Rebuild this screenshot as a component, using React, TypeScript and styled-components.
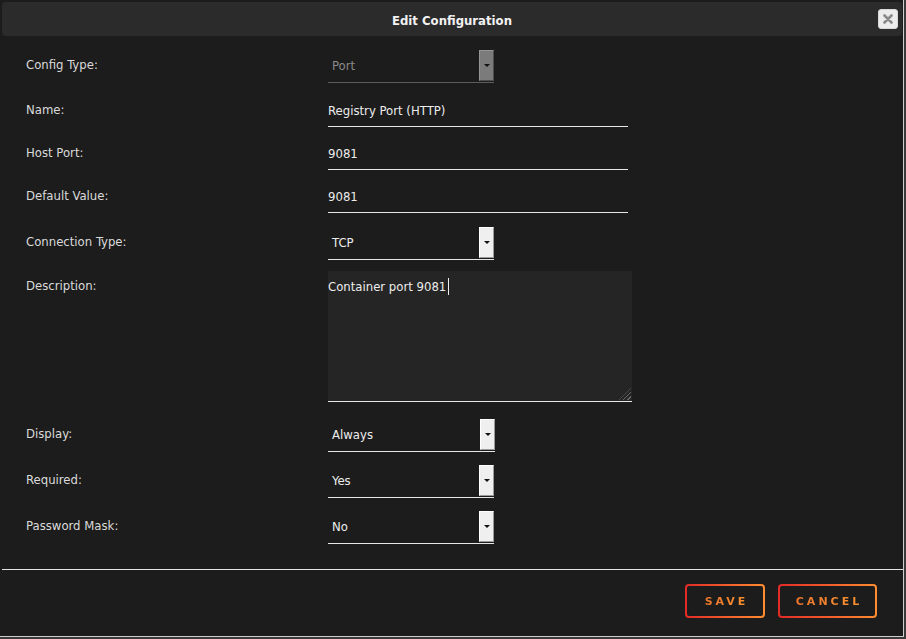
import React from 'react';
import styled, { createGlobalStyle } from 'styled-components';

const GlobalStyle = createGlobalStyle`
    html, body {
        margin:0;
        padding:0;
        background:#3a3a3a;
        width:906px;
        height:639px;
        overflow:hidden;
    }
`

const Dialog = styled.div`
    width:904px;
    height:637px;
    background-color:#1c1c1c;
    border-right:1px solid #cfcfcf;
    border-bottom:1px solid #cfcfcf;
    box-sizing:border-box;
    padding-top:2px;
    display:flex;
    flex-direction:column;
    font:normal 400 13px/1.2 "DejaVu Sans Condensed", "DejaVu Sans", sans-serif;
    color:#dcdcdc;
    position:relative;
`

const TitleBar = styled.div`
    margin:0 1px 0 2px;
    height:34px;
    padding-top:2px;
    box-sizing:border-box;
    background-color:#2b2b2b;
    border-radius:4px;
    display:flex;
    align-items:center;
    justify-content:center;
    position:relative;
`

const Title = styled.h1`
    margin:0;
    font:normal 700 13px/1 "DejaVu Sans Condensed", "DejaVu Sans", sans-serif;
    color:#f2f2f2;
`

const CloseButton = styled.button`
    position:absolute;
    right:4px;
    top:7px;
    width:20px;
    height:20px;
    padding:0;
    border:1px solid #d8d8d8;
    border-radius:3px;
    background:#ececec;
    display:flex;
    align-items:center;
    justify-content:center;
`

const Form = styled.div`
    padding:14px 0 0 26px;
    display:flex;
    flex-direction:column;
    flex:1;
`

const Row = styled.div<{ $top: number }>`
    display:grid;
    grid-template-columns:302px auto;
    margin-top:${p => p.$top}px;
`

const Label = styled.label`
    line-height:30px;
    color:#dadada;
`

const TextInput = styled.div`
    width:300px;
    height:32px;
    box-sizing:border-box;
    border-bottom:1px solid #e6e6e6;
    line-height:32px;
    color:#ececec;
`

const SelectBox = styled.div<{ $disabled?: boolean; $width?: number }>`
    width:${p => p.$width ?? 166}px;
    height:33px;
    box-sizing:border-box;
    border-bottom:1px solid ${p => p.$disabled ? '#5c5c5c' : '#e6e6e6'};
    display:flex;
    align-items:stretch;
    color:${p => p.$disabled ? '#8a8a8a' : '#ececec'};
`

const SelectValue = styled.span`
    flex:1;
    padding-left:4px;
    line-height:32px;
`

const ArrowButton = styled.span<{ $disabled?: boolean }>`
    width:15px;
    box-sizing:border-box;
    margin-bottom:1px;
    background:${p => p.$disabled ? '#7b7b7b' : '#efefef'};
    border:1px solid;
    border-color:${p => p.$disabled ? '#959595 #4e4e4e #4e4e4e #959595' : '#ffffff #9a9a9a #9a9a9a #ffffff'};
    display:flex;
    align-items:center;
    justify-content:center;
    &::after {
        content:'';
        border-left:3px solid transparent;
        border-right:3px solid transparent;
        border-top:3px solid #111;
    }
`

const TextArea = styled.div`
    width:304px;
    height:131px;
    box-sizing:border-box;
    background:#252525;
    border-bottom:1px solid #e6e6e6;
    padding-top:7px;
    line-height:16px;
    color:#ececec;
    position:relative;
`

const Caret = styled.span`
    display:inline-block;
    width:1px;
    height:17px;
    margin-left:2px;
    vertical-align:-4px;
    background:#f0f0f0;
`

const Grip = styled.span`
    position:absolute;
    right:1px;
    bottom:1px;
    width:12px;
    height:12px;
    background:repeating-linear-gradient(135deg, transparent 0 2px, #6a6a6a 2px 3px);
    clip-path:polygon(100% 0, 100% 100%, 0 100%);
`

const Separator = styled.hr`
    margin:25px 0 0 -24px;
    border:0;
    border-top:1px solid #e4e4e4;
    width:901px;
`

const Footer = styled.div`
    display:flex;
    justify-content:flex-end;
    gap:13px;
    padding:14px 26px 0 0;
`

const ActionButton = styled.button<{ $width: number }>`
    width:${p => p.$width}px;
    height:34px;
    border:2px solid transparent;
    border-radius:4px;
    background:linear-gradient(#1c1c1c,#1c1c1c) padding-box, linear-gradient(90deg,#e32a27,#ff8d30) border-box;
    display:flex;
    align-items:center;
    justify-content:center;
    padding:0 0 0 3px;
`

const ButtonText = styled.span`
    font:normal 700 11px/1 "DejaVu Sans", sans-serif;
    letter-spacing:3px;
    background:linear-gradient(90deg,#ec762c,#fa922f);
    -webkit-background-clip:text;
    background-clip:text;
    color:transparent;
`

const CloseIcon = () => (
    <svg width="10" height="10" viewBox="0 0 10 10">
        <path d="M1.5 1.5 L8.5 8.5 M8.5 1.5 L1.5 8.5" stroke="#8a8a8a" strokeWidth="2.6" strokeLinecap="round"/>
    </svg>
)

const Select = ({ value, disabled, width }: { value: string; disabled?: boolean; width?: number }) => (
    <SelectBox $disabled={disabled} $width={width}>
        <SelectValue>{value}</SelectValue>
        <ArrowButton $disabled={disabled}/>
    </SelectBox>
)

export default function App() {
    return (
        <>
            <GlobalStyle/>
            <Dialog>
                <TitleBar>
                    <Title>Edit Configuration</Title>
                    <CloseButton aria-label="close"><CloseIcon/></CloseButton>
                </TitleBar>
                <Form>
                    <Row $top={0}><Label>Config Type:</Label><Select value="Port" disabled/></Row>
                    <Row $top={12}><Label>Name:</Label><TextInput>Registry Port (HTTP)</TextInput></Row>
                    <Row $top={11}><Label>Host Port:</Label><TextInput>9081</TextInput></Row>
                    <Row $top={11}><Label>Default Value:</Label><TextInput>9081</TextInput></Row>
                    <Row $top={14}><Label>Connection Type:</Label><Select value="TCP"/></Row>
                    <Row $top={11}>
                        <Label>Description:</Label>
                        <TextArea>Container port 9081<Caret/><Grip/></TextArea>
                    </Row>
                    <Row $top={17}><Label>Display:</Label><Select value="Always" width={167}/></Row>
                    <Row $top={13}><Label>Required:</Label><Select value="Yes"/></Row>
                    <Row $top={13}><Label>Password Mask:</Label><Select value="No"/></Row>
                    <Separator/>
                    <Footer>
                        <ActionButton $width={80}><ButtonText>SAVE</ButtonText></ActionButton>
                        <ActionButton $width={99}><ButtonText>CANCEL</ButtonText></ActionButton>
                    </Footer>
                </Form>
            </Dialog>
        </>
    );
}
